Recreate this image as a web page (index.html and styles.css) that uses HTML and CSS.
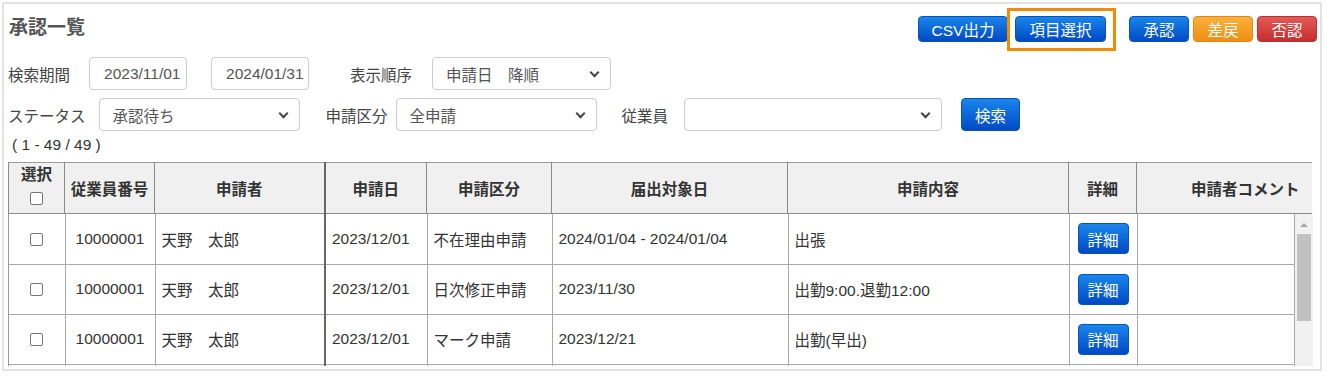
FILE: index.html
```html
<!DOCTYPE html>
<html lang="ja">
<head>
  <meta charset="UTF-8">
  <title>承認一覧</title>
  <link rel="stylesheet" href="styles.css">
</head>
<body>

  <div class="panel">
    <div class="topbar">
      <h1 class="title">承認一覧</h1>
      <div class="actions">
        <button class="btn btn-blue btn-csv">CSV出力</button>
        <span class="highlight"><button class="btn btn-blue btn-item">項目選択</button></span>
        <button class="btn btn-blue btn-small btn-approve">承認</button>
        <button class="btn btn-orange btn-small">差戻</button>
        <button class="btn btn-red btn-small">否認</button>
      </div>
    </div>

    <div class="filter-row">
      <label class="lbl">検索期間</label>
      <input class="field date" type="text" value="2023/11/01">
      <input class="field date date-to" type="text" value="2024/01/31">
      <label class="lbl lbl-order">表示順序</label>
      <div class="field select sel-order">申請日　降順<span class="chev"></span></div>
    </div>

    <div class="filter-row row2">
      <label class="lbl">ステータス</label>
      <div class="field select sel-status">承認待ち<span class="chev"></span></div>
      <label class="lbl lbl-kind">申請区分</label>
      <div class="field select sel-kind">全申請<span class="chev"></span></div>
      <label class="lbl lbl-emp">従業員</label>
      <div class="field select sel-emp"><span class="chev"></span></div>
      <button class="btn btn-blue btn-search">検索</button>
    </div>

    <div class="count">( 1 - 49 / 49 )</div>

    <table class="grid head">
      <colgroup>
        <col style="width:56px"><col style="width:90px"><col style="width:170px">
        <col style="width:102px"><col style="width:125px"><col style="width:236px">
        <col style="width:281px"><col style="width:68px"><col style="width:175px">
      </colgroup>
      <tr>
        <th class="c-sel">選択<br><span class="check"></span></th>
        <th>従業員番号</th>
        <th>申請者</th>
        <th class="strong-left">申請日</th>
        <th>申請区分</th>
        <th>届出対象日</th>
        <th>申請内容</th>
        <th>詳細</th>
        <th class="c-comment">申請者コメント</th>
      </tr>
    </table>

    <div class="body-wrap">
      <table class="grid body">
        <colgroup>
          <col style="width:56px"><col style="width:90px"><col style="width:170px">
          <col style="width:102px"><col style="width:125px"><col style="width:236px">
          <col style="width:281px"><col style="width:68px"><col style="width:157px">
        </colgroup>
        <tr>
          <td class="center"><span class="check"></span></td>
          <td class="center">10000001</td>
          <td>天野　太郎</td>
          <td class="strong-left">2023/12/01</td>
          <td>不在理由申請</td>
          <td>2024/01/04 - 2024/01/04</td>
          <td>出張</td>
          <td class="center"><button class="btn btn-blue btn-detail">詳細</button></td>
          <td></td>
        </tr>
        <tr>
          <td class="center"><span class="check"></span></td>
          <td class="center">10000001</td>
          <td>天野　太郎</td>
          <td class="strong-left">2023/12/01</td>
          <td>日次修正申請</td>
          <td>2023/11/30</td>
          <td>出勤9:00.退勤12:00</td>
          <td class="center"><button class="btn btn-blue btn-detail">詳細</button></td>
          <td></td>
        </tr>
        <tr>
          <td class="center"><span class="check"></span></td>
          <td class="center">10000001</td>
          <td>天野　太郎</td>
          <td class="strong-left">2023/12/01</td>
          <td>マーク申請</td>
          <td>2023/12/21</td>
          <td>出勤(早出)</td>
          <td class="center"><button class="btn btn-blue btn-detail">詳細</button></td>
          <td></td>
        </tr>
        <tr class="peek">
          <td></td><td></td><td></td><td class="strong-left"></td><td></td>
          <td></td><td></td><td></td><td></td>
        </tr>
      </table>
      <div class="scrollbar">
        <span class="arrow-up"></span>
        <span class="thumb"></span>
      </div>
    </div>
  </div>

</body>
</html>
```

FILE: styles.css
```css
* {
  box-sizing: border-box;
}

body {
  margin: 0;
  background: #fff;
  font-family: "Liberation Sans", "Noto Sans CJK JP", sans-serif;
  font-size: 15.5px;
  color: #333;
}

.panel {
  margin: 2px 3px 0 2px;
  height: 369px;
  border: 2px solid #e3e3e3;
  padding: 0 3px 0 4px;
  overflow: hidden;
}

/* top bar */
.topbar {
  display: flex;
  justify-content: space-between;
  align-items: flex-start;
  height: 52px;
}

.title {
  margin: 8px 0 0 1px;
  font-size: 19px;
  font-weight: bold;
  color: #555;
}

.actions {
  display: flex;
  align-items: center;
  margin-top: 12px;
}

.btn {
  height: 26px;
  padding: 0;
  border: 1px solid #0a4fb0;
  border-radius: 4px;
  font-family: inherit;
  font-size: 15.5px;
  color: #fff;
  cursor: pointer;
}

.btn-blue {
  background: linear-gradient(#1a86ec, #0049c4);
  border-color: #0753b8;
}

.btn-orange {
  background: linear-gradient(#fbb03c, #f08e12);
  border-color: #e38a14;
}

.btn-red {
  background: linear-gradient(#e25a57, #c52e2e);
  border-color: #b83232;
}

.btn-csv {
  width: 90px;
}

.highlight {
  position: relative;
  margin-left: 7px;
  display: inline-flex;
}

.highlight::after {
  content: "";
  position: absolute;
  left: -8px;
  right: -10px;
  top: -8px;
  bottom: -9px;
  border: 3px solid #f08c00;
}

.btn-item {
  width: 91px;
}

.btn-small {
  width: 60px;
  margin-left: 4px;
}

.btn-approve {
  margin-left: 23px;
}

/* filters */
.filter-row {
  display: flex;
  align-items: center;
  height: 33px;
  margin-top: 1px;
}

.row2 {
  margin-top: 8px;
}

.lbl {
  color: #444;
  white-space: nowrap;
}

.field {
  height: 33px;
  border: 1px solid #ccc;
  border-radius: 4px;
  background: #fff;
  font-family: inherit;
  font-size: 15.5px;
  color: #555;
}

.date {
  width: 98px;
  margin-left: 19px;
  padding: 0 0 0 14px;
}

.date-to {
  margin-left: 24px;
}

.lbl-order {
  margin-left: 41px;
}

.select {
  display: flex;
  align-items: center;
  position: relative;
  padding-left: 13px;
  white-space: nowrap;
}

.chev {
  position: absolute;
  right: 12px;
  top: 11px;
  width: 7px;
  height: 7px;
  border-right: 2px solid #444;
  border-bottom: 2px solid #444;
  transform: rotate(45deg);
}

.sel-order {
  width: 179px;
  margin-left: 20px;
}

.sel-status {
  width: 201px;
  margin-left: 13px;
}

.lbl-kind {
  margin-left: 26px;
}

.sel-kind {
  width: 201px;
  margin-left: 8px;
}

.lbl-emp {
  margin-left: 25px;
}

.sel-emp {
  width: 258px;
  margin-left: 16px;
}

.btn-search {
  width: 59px;
  height: 33px;
  margin-left: 19px;
}

.count {
  margin: 3px 0 0 4px;
  height: 22px;
  line-height: 22px;
  color: #333;
}

/* table */
.grid {
  border-collapse: collapse;
  table-layout: fixed;
}

.head {
  width: 1303px;
  margin-top: 6px;
}

.head th {
  height: 51px;
  background: #f0f0f0;
  border: 1px solid #8a8a8a;
  border-top-color: #999;
  font-weight: bold;
  text-align: center;
  color: #333;
  padding: 0 4px;
  white-space: nowrap;
}

.head .c-sel {
  vertical-align: top;
  padding-top: 2px;
  line-height: 20px;
}

.head .c-sel .check {
  margin-top: 5px;
}

.head .c-comment {
  border-right: none;
  text-align: right;
  padding-right: 12px;
}

.strong-left {
  border-left: 2px solid #666 !important;
}

.body-wrap {
  display: flex;
  height: 152px;
  overflow: hidden;
  border-left: 1px solid #999;
}

.body {
  width: 1284px;
  flex-shrink: 0;
}

.body td {
  height: 50px;
  border: 1px solid #aaa;
  border-top: none;
  padding: 0 6px;
  white-space: nowrap;
  color: #333;
}

.body td:first-child {
  border-left: none;
}

.center {
  text-align: center;
}

.check {
  display: inline-block;
  width: 13px;
  height: 13px;
  border: 1px solid #767676;
  border-radius: 2px;
  background: #fff;
  vertical-align: middle;
}

.btn-detail {
  width: 51px;
  height: 31px;
}

.scrollbar {
  position: relative;
  width: 18px;
  height: 152px;
  background: #f1f1f1;
}

.arrow-up {
  position: absolute;
  left: 5px;
  top: 9px;
  border-left: 4px solid transparent;
  border-right: 4px solid transparent;
  border-bottom: 4px solid #a3a3a3;
}

.thumb {
  position: absolute;
  left: 2px;
  top: 20px;
  width: 14px;
  height: 87px;
  background: #c1c1c1;
}
```
